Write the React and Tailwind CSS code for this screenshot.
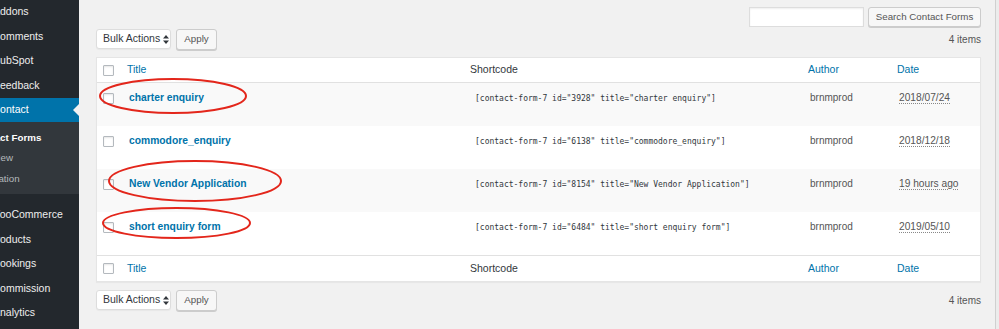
const MENU_TOP = [
  { label: 'Addons', cls: 'ml-[-7px]' },
  { label: 'Comments', cls: 'ml-[-7.5px]' },
  { label: 'HubSpot', cls: 'ml-[-7.5px]' },
  { label: 'Feedback', cls: 'ml-[-6.5px]' },
];

const SUBMENU = [
  { label: 'Contact Forms', current: true },
  { label: 'Add New' },
  { label: 'Integration' },
];

const MENU_BOTTOM = [
  { label: 'WooCommerce', cls: 'ml-[-10px]' },
  { label: 'Products', cls: 'ml-[-10.5px]' },
  { label: 'Bookings', cls: 'ml-[-7px]' },
  { label: 'Commission', cls: 'ml-[-7.5px]' },
  { label: 'Analytics', cls: 'ml-[-7px]' },
];

const FORMS = [
  { title: 'charter enquiry', id: '3928', date: '2018/07/24' },
  { title: 'commodore_enquiry', id: '6138', date: '2018/12/18' },
  { title: 'New Vendor Application', id: '8154', date: '19 hours ago' },
  { title: 'short enquiry form', id: '6484', date: '2019/05/10' },
];

const COLS = 'grid grid-cols-[30px_343px_338px_89px_1fr]';

function Checkbox() {
  return (
    <span className="block w-[11px] h-[11px] bg-white border border-[#b4b9be] rounded-[1px] shadow-[inset_0_1px_2px_rgba(0,0,0,0.1)]" />
  );
}

function SelectArrows() {
  return (
    <svg width="6" height="9" viewBox="0 0 6 9" className="ml-[3px]">
      <path d="M3 0 L6 3.6 L0 3.6 Z" fill="#32373c" />
      <path d="M3 9 L6 5.4 L0 5.4 Z" fill="#32373c" />
    </svg>
  );
}

function BulkBar() {
  return (
    <div className="flex items-center h-[20px] justify-between">
      <div className="flex items-center gap-[5px] h-full">
        <div className="flex items-center h-[20px] w-[75px] pl-[6px] bg-white border border-[#ddd] rounded-[3px] text-[10.5px] text-[#32373c] shadow-[0_1px_1px_rgba(0,0,0,0.04)]">
          Bulk Actions
          <SelectArrows />
        </div>
        <div className="flex items-center justify-center h-[21px] w-[41px] bg-[#f7f7f7] border border-[#ccc] rounded-[3px] text-[9.75px] text-[#555] shadow-[0_1px_0_#ccc]">
          Apply
        </div>
      </div>
      <span className="text-[10px] text-[#555]">4 items</span>
    </div>
  );
}

function HeaderRow({ footer }) {
  return (
    <div
      className={`${COLS} h-[25px] items-center text-[10.5px] ${
        footer ? 'border-t border-[#e1e1e1] h-[26px]' : 'border-b border-[#e1e1e1]'
      }`}
    >
      <div className="pl-[6px]">
        <Checkbox />
      </div>
      <span className="text-[#0073aa]">Title</span>
      <span className="text-[#32373c]">Shortcode</span>
      <span className="text-[#0073aa]">Author</span>
      <span className="text-[#0073aa]">Date</span>
    </div>
  );
}

export default function App() {
  return (
    <div className="relative w-[999px] h-[329px] flex overflow-hidden bg-[#f1f1f1] font-['Liberation_Sans',Arial,sans-serif]">
      {/* Admin menu */}
      <nav className="w-[79px] shrink-0 bg-[#23282d] overflow-hidden text-[10.5px] text-[#eee]">
        {MENU_TOP.map(m => (
          <div key={m.label} className="h-[24.5px] flex items-center whitespace-nowrap">
            <span className={m.cls}>{m.label}</span>
          </div>
        ))}
        <div className="relative h-[24px] flex items-center whitespace-nowrap bg-[#0073aa] text-white">
          <span className="ml-[-7.5px]">Contact</span>
          <span className="absolute right-0 top-[6px] w-0 h-0 border-y-[6px] border-y-transparent border-r-[6px] border-r-[#f1f1f1]" />
        </div>
        <div className="bg-[#32373c] pt-[6px] pb-[4.5px] text-[9.75px]">
          {SUBMENU.map(s => (
            <div key={s.label} className="h-[20.5px] flex items-center whitespace-nowrap">
              <span
                className={
                  s.current
                    ? 'ml-[-27.5px] font-bold text-white'
                    : 'ml-[-26.5px] text-[#b4b9be]'
                }
              >
                {s.label}
              </span>
            </div>
          ))}
        </div>
        <div className="h-[9px]" />
        {MENU_BOTTOM.map(m => (
          <div key={m.label} className="h-[24.5px] flex items-center whitespace-nowrap">
            <span className={m.cls}>{m.label}</span>
          </div>
        ))}
      </nav>

      {/* Main content */}
      <main className="flex-1 pl-[17px] pr-[14px] pt-[7px]">
        <div className="flex justify-end gap-[4px] h-[20px]">
          <div className="w-[115px] h-[20px] bg-white border border-[#ddd] shadow-[inset_0_1px_2px_rgba(0,0,0,0.07)]" />
          <div className="flex items-center justify-center w-[113px] h-[20px] bg-[#f7f7f7] border border-[#ccc] rounded-[3px] text-[9.75px] text-[#555] shadow-[0_1px_0_#ccc]">
            Search Contact Forms
          </div>
        </div>

        <div className="mt-[2px]">
          <BulkBar />
        </div>

        <div className="mt-[8px] bg-white border border-[#e5e5e5] shadow-[0_1px_1px_rgba(0,0,0,0.04)]">
          <HeaderRow />
          {FORMS.map((f, i) => (
            <div
              key={f.id}
              className={`${COLS} h-[43px] items-start pt-[8px] ${i % 2 === 0 ? 'bg-[#f9f9f9]' : 'bg-white'}`}
            >
              <div className="pl-[6px] pt-[2px]">
                <Checkbox />
              </div>
              <span className="pl-[2px] text-[10.3px] font-bold text-[#0073aa] leading-[14px]">{f.title}</span>
              <span className="pl-[5px] pt-[2px] font-['DejaVu_Sans_Mono',monospace] text-[8px] text-[#32373c] leading-[12px] whitespace-nowrap">
                [contact-form-7 id="{f.id}" title="{f.title}"]
              </span>
              <span className="pl-[2px] text-[10px] text-[#555] leading-[14px]">brnmprod</span>
              <span className="pl-[2px] text-[10.2px] text-[#555] leading-[14px]">
                <span className="underline decoration-dotted decoration-[#888] underline-offset-[2px]">{f.date}</span>
              </span>
            </div>
          ))}
          <HeaderRow footer />
        </div>

        <div className="mt-[8px]">
          <BulkBar />
        </div>
      </main>

      {/* Edge of neighbouring panel */}
      <div className="w-[4px] shrink-0 border-l border-[#d0d0d0] bg-[#ececec]" />

      {/* Red annotation ellipses */}
      <svg className="absolute inset-0 pointer-events-none" width="999" height="329">
        <ellipse cx="173" cy="96" rx="73" ry="17" fill="none" stroke="#e3261b" strokeWidth="2" />
        <ellipse cx="195" cy="181" rx="86" ry="20" fill="none" stroke="#e3261b" strokeWidth="2" />
        <ellipse cx="176.5" cy="223" rx="73.5" ry="15" fill="none" stroke="#e3261b" strokeWidth="2" />
      </svg>
    </div>
  );
}
